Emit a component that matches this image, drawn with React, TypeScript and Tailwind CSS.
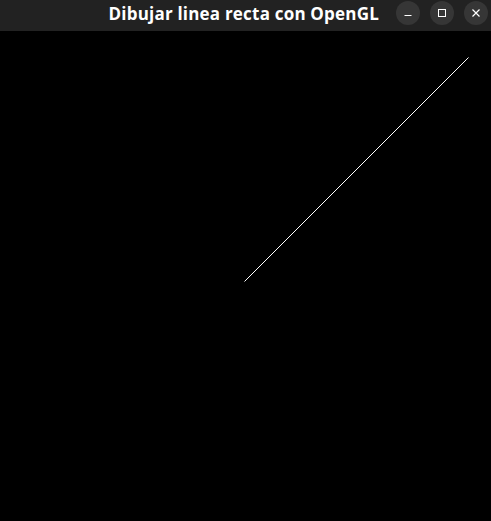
import React from "react";

export default function App() {
  return (
    <div className="w-[491px] h-[521px] flex flex-col bg-black font-['Open_Sans',sans-serif]">
      {/* Title bar */}
      <div className="h-[31px] bg-[#222222] flex items-center relative shrink-0">
        <div className="flex-1 flex justify-end pr-[112px]">
          <span className="text-white font-bold text-[17px] tracking-[0.2px] leading-none mt-[-4px]">
            Dibujar linea recta con OpenGL
          </span>
        </div>
        <div className="absolute right-[3px] top-[1px] flex gap-[10px]">
          <button className="w-[24px] h-[24px] rounded-full bg-[#363636] flex items-center justify-center">
            <svg width="10" height="10" viewBox="0 0 10 10">
              <path d="M1.5 7.5h7" stroke="#fff" strokeWidth="1" />
            </svg>
          </button>
          <button className="w-[24px] h-[24px] rounded-full bg-[#363636] flex items-center justify-center">
            <svg width="10" height="10" viewBox="0 0 10 10">
              <rect x="1.5" y="1.5" width="7" height="7" fill="none" stroke="#fff" strokeWidth="1" />
            </svg>
          </button>
          <button className="w-[24px] h-[24px] rounded-full bg-[#363636] flex items-center justify-center">
            <svg width="10" height="10" viewBox="0 0 10 10">
              <path d="M1.5 1.5l7 7M8.5 1.5l-7 7" stroke="#fff" strokeWidth="1.2" />
            </svg>
          </button>
        </div>
      </div>

      {/* GL canvas */}
      <div className="flex-1 bg-black">
        <svg width="491" height="490" viewBox="0 0 491 490">
          <line x1="244.5" y1="250.5" x2="468.5" y2="26.5" stroke="#fff" strokeWidth="1" />
        </svg>
      </div>
    </div>
  );
}
